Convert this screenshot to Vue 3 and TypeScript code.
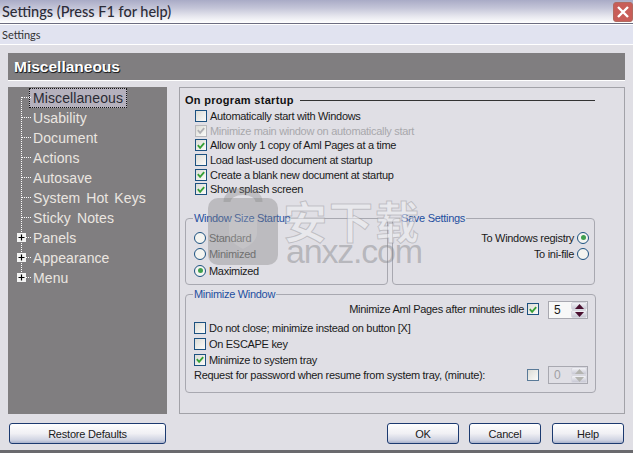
<script setup lang="ts">
interface Row { label: string; checked: boolean; disabled?: boolean }
const startup: Row[] = [
  { label: 'Automatically start with Windows', checked: false },
  { label: 'Minimize main window on automatically start', checked: true, disabled: true },
  { label: 'Allow only 1 copy of Aml Pages at a time', checked: true },
  { label: 'Load last-used document at startup', checked: false },
  { label: 'Create a blank new document at startup', checked: true },
  { label: 'Show splash screen', checked: true },
]
const minimize: Row[] = [
  { label: 'Do not close; minimize instead on button [X]', checked: false },
  { label: 'On ESCAPE key', checked: false },
  { label: 'Minimize to system tray', checked: true },
]
const tree = [
  { label: 'Miscellaneous', plus: false, selected: true },
  { label: 'Usability', plus: false },
  { label: 'Document', plus: false },
  { label: 'Actions', plus: false },
  { label: 'Autosave', plus: false },
  { label: 'System Hot Keys', plus: false },
  { label: 'Sticky Notes', plus: false },
  { label: 'Panels', plus: true },
  { label: 'Appearance', plus: true },
  { label: 'Menu', plus: true },
]
const sizes = [
  { label: 'Standard', on: false },
  { label: 'Minimized', on: false },
  { label: 'Maximized', on: true },
]
const saves = [
  { label: 'To Windows registry', on: true },
  { label: 'To ini-file', on: false },
]
</script>

<template>
  <div class="window">
    <header class="titlebar">
      <span class="title">Settings (Press F1 for help)</span>
      <button class="close" aria-label="Close">
        <svg width="14" height="14" viewBox="0 0 14 14"><path d="M2 2 L12 12 M12 2 L2 12" stroke="#fff" stroke-width="2.4" fill="none" /></svg>
      </button>
    </header>
    <nav class="menubar"><span>Settings</span></nav>

    <div class="body">
      <div class="band">Miscellaneous</div>
      <div class="main">
        <aside class="tree">
          <div class="vline"></div>
          <div v-for="t in tree" :key="t.label" class="node">
            <span class="expander">
              <span class="hline"></span>
              <span v-if="t.plus" class="plus">
                <svg width="9" height="9" viewBox="0 0 9 9"><path d="M1.5 4.5 H7.5 M4.5 1.5 V7.5" stroke="#000" stroke-width="1.2" /></svg>
              </span>
            </span>
            <span class="node-label" :class="{ selected: t.selected }">{{ t.label }}</span>
          </div>
        </aside>

        <section class="panel">
          <div class="heading"><b>On program startup</b><i></i></div>
          <div class="checks">
            <label v-for="r in startup" :key="r.label" class="row" :class="{ off: r.disabled }">
              <span class="box" :class="{ dim: r.disabled }">
                <svg v-if="r.checked" width="11" height="11" viewBox="0 0 11 11"><path d="M2 5.2 L4.5 8 L9 2.8" :stroke="r.disabled ? '#b0b0b4' : '#35a035'" stroke-width="2" fill="none" /></svg>
              </span>
              {{ r.label }}
            </label>
          </div>

          <div class="pair">
            <fieldset class="group">
              <legend>Window Size Startup</legend>
              <label v-for="s in sizes" :key="s.label" class="row radio-row" :class="{ muted: !s.on }">
                <span class="radio"><em v-if="s.on"></em></span>
                {{ s.label }}
              </label>
            </fieldset>
            <fieldset class="group">
              <legend>Save Settings</legend>
              <label v-for="s in saves" :key="s.label" class="row radio-row right">
                {{ s.label }}
                <span class="radio"><em v-if="s.on"></em></span>
              </label>
            </fieldset>
          </div>

          <fieldset class="group wide">
            <legend>Minimize Window</legend>
            <div class="row idle">
              Minimize Aml Pages after minutes idle
              <span class="box">
                <svg width="11" height="11" viewBox="0 0 11 11"><path d="M2 5.2 L4.5 8 L9 2.8" stroke="#35a035" stroke-width="2" fill="none" /></svg>
              </span>
              <span class="spin">
                <span class="val">5</span>
                <span class="arrows">
                  <span class="arr"><svg width="9" height="5" viewBox="0 0 9 5"><path d="M4.5 0 L9 5 H0 Z" fill="#4a1030" /></svg></span>
                  <span class="arr"><svg width="9" height="5" viewBox="0 0 9 5"><path d="M0 0 H9 L4.5 5 Z" fill="#4a1030" /></svg></span>
                </span>
              </span>
            </div>
            <label v-for="r in minimize" :key="r.label" class="row min-row">
              <span class="box">
                <svg v-if="r.checked" width="11" height="11" viewBox="0 0 11 11"><path d="M2 5.2 L4.5 8 L9 2.8" stroke="#35a035" stroke-width="2" fill="none" /></svg>
              </span>
              {{ r.label }}
            </label>
            <div class="row pass">
              <span class="pass-label">Request for password when resume from system tray, (minute):</span>
              <span class="box"></span>
              <span class="spin disabled">
                <span class="val">0</span>
                <span class="arrows">
                  <span class="arr"><svg width="9" height="5" viewBox="0 0 9 5"><path d="M4.5 0 L9 5 H0 Z" fill="#b4b4b0" /></svg></span>
                  <span class="arr"><svg width="9" height="5" viewBox="0 0 9 5"><path d="M0 0 H9 L4.5 5 Z" fill="#b4b4b0" /></svg></span>
                </span>
              </span>
            </div>
          </fieldset>
        </section>
      </div>

      <footer class="footer">
        <button class="btn restore">Restore Defaults</button>
        <div class="actions">
          <button class="btn">OK</button>
          <button class="btn">Cancel</button>
          <button class="btn last">Help</button>
        </div>
      </footer>
    </div>

    <div class="watermark" aria-hidden="true">
      <svg class="bag" width="72" height="80" viewBox="0 0 72 80">
        <path d="M20 16 C20 2 52 2 52 16" fill="none" stroke="#808080" stroke-opacity=".35" stroke-width="7" />
        <rect x="1" y="12" width="70" height="67" rx="10" fill="#808080" fill-opacity=".38" />
        <path d="M36 28 L50 33 V47 C50 55 42 60 36 63 C30 60 22 55 22 47 V33 Z" fill="#fff" fill-opacity=".12" />
      </svg>
      <span class="wm-cn">安下载</span>
      <span class="wm-en">anxz.com</span>
    </div>
  </div>
</template>

<style>
html, body { margin: 0; padding: 0; overflow: hidden; }
</style>

<style scoped>
.window {
  position: relative;
  width: 633px;
  height: 453px;
  overflow: hidden;
  display: flex;
  flex-direction: column;
  background: #e0dfe5;
  font-family: "Liberation Sans", Arial, sans-serif;
  font-size: 12px;
  color: #1a1a1a;
  box-sizing: border-box;
  border-bottom: 3px solid #6a6a6e;
}
.titlebar {
  height: 24px;
  flex: none;
  display: flex;
  align-items: center;
  justify-content: space-between;
  padding-left: 2px;
  box-sizing: border-box;
  background: linear-gradient(#a9abc6 0, #c4c5d8 35%, #e6e6ee 70%, #ffffff 100%);
  border-bottom: 1px solid #6c6c80;
}
.title { font-size: 14.5px; color: #2c2c38; font-family: Lato, sans-serif; font-weight: 500; line-height: 20px; }
.close {
  width: 20px;
  height: 20px;
  padding: 0;
  border: 1px solid #b06a60;
  border-radius: 3px;
  background: #c85d58;
  display: flex;
  align-items: center;
  justify-content: center;
}
.menubar {
  height: 19px;
  flex: none;
  padding: 0 2px;
  display: flex;
  align-items: center;
  font-family: Lato, sans-serif;
  font-size: 11px;
  background: #e1e3f0;
  border-top: 1px solid #fff;
  border-bottom: 1px solid #fff;
  color: #333;
}
.body {
  flex: 1;
  display: flex;
  flex-direction: column;
  padding: 8px 8px 6px;
  min-height: 0;
}
.band {
  height: 27px;
  flex: none;
  background: #807e80;
  border-bottom: 1px solid #fff;
  box-sizing: content-box;
  color: #fff;
  font-size: 15.5px;
  font-weight: 700;
  line-height: 27px;
  padding-left: 6px;
  text-shadow: 1px 1px 0 #222, 0 1px 1px #333;
}
.main {
  flex: none;
  height: 327px;
  margin-top: 6px;
  display: flex;
  gap: 12px;
}
.tree {
  position: relative;
  width: 159px;
  flex: none;
  background: #807e80;
  padding-top: 1px;
  box-sizing: border-box;
}
.vline {
  position: absolute;
  left: 13px;
  top: 10px;
  height: 181px;
  border-left: 1px dotted #fff;
}
.node {
  height: 20px;
  display: flex;
  align-items: center;
}
.expander {
  position: relative;
  width: 22px;
  height: 20px;
  flex: none;
}
.hline {
  position: absolute;
  left: 13px;
  top: 9px;
  width: 10px;
  border-top: 1px dotted #fff;
}
.plus {
  position: absolute;
  left: 9px;
  top: 5px;
  width: 9px;
  height: 9px;
  background: #f2f2f2;
  display: flex;
}
.node-label {
  font-size: 14px;
  word-spacing: 2px;
  letter-spacing: .1px;
  color: #ebe6e0;
  padding: 0 3px;
  margin-left: -1px;
  line-height: 18px;
  border: 1px solid transparent;
  white-space: nowrap;
}
.node-label.selected {
  background: #b5b1bd;
  border: 1px dotted #111;
  color: #2a2a33;
}
.panel {
  width: 446px;
  flex: none;
  box-sizing: border-box;
  border: 1px solid #a2a2a8;
  padding: 5px 29px 0 5px;
}
.heading {
  display: flex;
  align-items: center;
  gap: 6px;
  height: 14px;
}
.heading b { font-size: 11px; letter-spacing: .3px; color: #111; white-space: nowrap; }
.heading i { flex: 1; border-top: 1px solid #333; }
.checks {
  padding: 2px 0 0 10px;
  display: flex;
  flex-direction: column;
}
.row {
  display: flex;
  align-items: center;
  gap: 3px;
  white-space: nowrap;
  font-size: 11px;
  letter-spacing: -.3px;
  height: 14.6px;
}
.row.off { color: #a8a8ac; }
.muted { color: #666; }
.box {
  width: 12px;
  height: 12px;
  flex: none;
  box-sizing: border-box;
  border: 1px solid #1c5180;
  background: linear-gradient(135deg, #dcdcd6, #fbfbf9);
  display: flex;
  align-items: center;
  justify-content: center;
}
.box.dim { border-color: #b8b8bc; }
.pair {
  display: flex;
  gap: 4px;
  margin-top: 15px;
}
.group {
  margin: 0;
  flex: 1;
  min-width: 0;
  height: 73px;
  box-sizing: border-box;
  border: 1px solid #a8a8b0;
  border-radius: 4px;
  padding: 5px 5px 0 8px;
}
.group legend {
  padding: 0 1px;
  margin-left: -1px;
  color: #1f4fa0;
  font-size: 11px;
  letter-spacing: -.3px;
  line-height: 13px;
}
.radio-row { height: 16.5px; }
.radio-row.right { justify-content: flex-end; }
.radio {
  width: 12px;
  height: 12px;
  flex: none;
  box-sizing: border-box;
  border: 1px solid #1c5180;
  border-radius: 50%;
  background: #f4f4f0;
  display: flex;
  align-items: center;
  justify-content: center;
}
.radio em { width: 5px; height: 5px; border-radius: 50%; background: #3f9f4f; }
.group.wide {
  flex: none;
  height: 105px;
  margin-top: 3px;
  padding: 0 7px 0 5px;
  width: 411px;
}
.group.wide legend { margin-left: 2px; }
.idle {
  justify-content: flex-end;
  gap: 3px;
  height: 19px;
  margin-top: -1px;
}
.idle .box { margin-right: 6px; }
.idle .spin { margin-top: 2px; }
.min-row { height: 16px; padding-left: 3px; }
.idle + .min-row { margin-top: 1px; }
.pass { height: 19px; margin-top: -2px; }
.pass-label { flex: 1; padding-left: 3px; }
.pass .box { margin-right: 6px; border-color: #5a7a98; }
.spin {
  width: 40px;
  height: 18px;
  flex: none;
  box-sizing: border-box;
  border: 1px solid #a8a8b0;
  background: #f8f8f8;
  display: flex;
  align-items: center;
  justify-content: space-between;
  font-size: 12px;
  letter-spacing: 0;
}
.spin.disabled { background: #e0dfe5; color: #a0a0a4; }
.val { padding-left: 5px; }
.arrows {
  width: 16px;
  height: 16px;
  display: flex;
  flex-direction: column;
}
.arr {
  flex: 1;
  display: flex;
  align-items: center;
  justify-content: center;
  background: linear-gradient(#f2f2f6, #c8c8d4);
  border: 1px solid #d8d8e0;
  border-radius: 2px;
  box-sizing: border-box;
}
.footer {
  display: flex;
  justify-content: space-between;
  margin-top: 9px;
  padding: 0 1px;
}
.actions { display: flex; gap: 10px; }
.btn {
  width: 72px;
  height: 21px;
  padding: 0;
  box-sizing: border-box;
  border: 1px solid #1c3a70;
  border-radius: 3px;
  background: linear-gradient(#ffffff 0, #f0f0f4 50%, #cfd3e2 85%, #a9b2cc 100%);
  font-family: "Liberation Sans", Arial, sans-serif;
  font-size: 11px;
  letter-spacing: -.2px;
  color: #1a1a1a;
}
.btn.last { margin-left: 1px; }
.btn.restore { width: 157px; }
.watermark {
  position: absolute;
  left: 206px;
  top: 186px;
  width: 240px;
  height: 84px;
  pointer-events: none;
}
.bag { position: absolute; left: 1px; top: 0; }
.wm-cn {
  position: absolute;
  left: 77px;
  top: 7px;
  font-family: "Noto Sans CJK SC", sans-serif;
  font-size: 44px;
  line-height: 54px;
  letter-spacing: 2px;
  font-weight: 700;
  color: rgba(240, 240, 244, .55);
  -webkit-text-stroke: 1px rgba(130, 130, 135, .38);
  white-space: nowrap;
}
.wm-en {
  position: absolute;
  left: 80px;
  top: 47px;
  font-family: "Liberation Sans", sans-serif;
  font-size: 34px;
  letter-spacing: -1.2px;
  line-height: 36px;
  color: rgba(125, 125, 130, .42);
  white-space: nowrap;
}
</style>
